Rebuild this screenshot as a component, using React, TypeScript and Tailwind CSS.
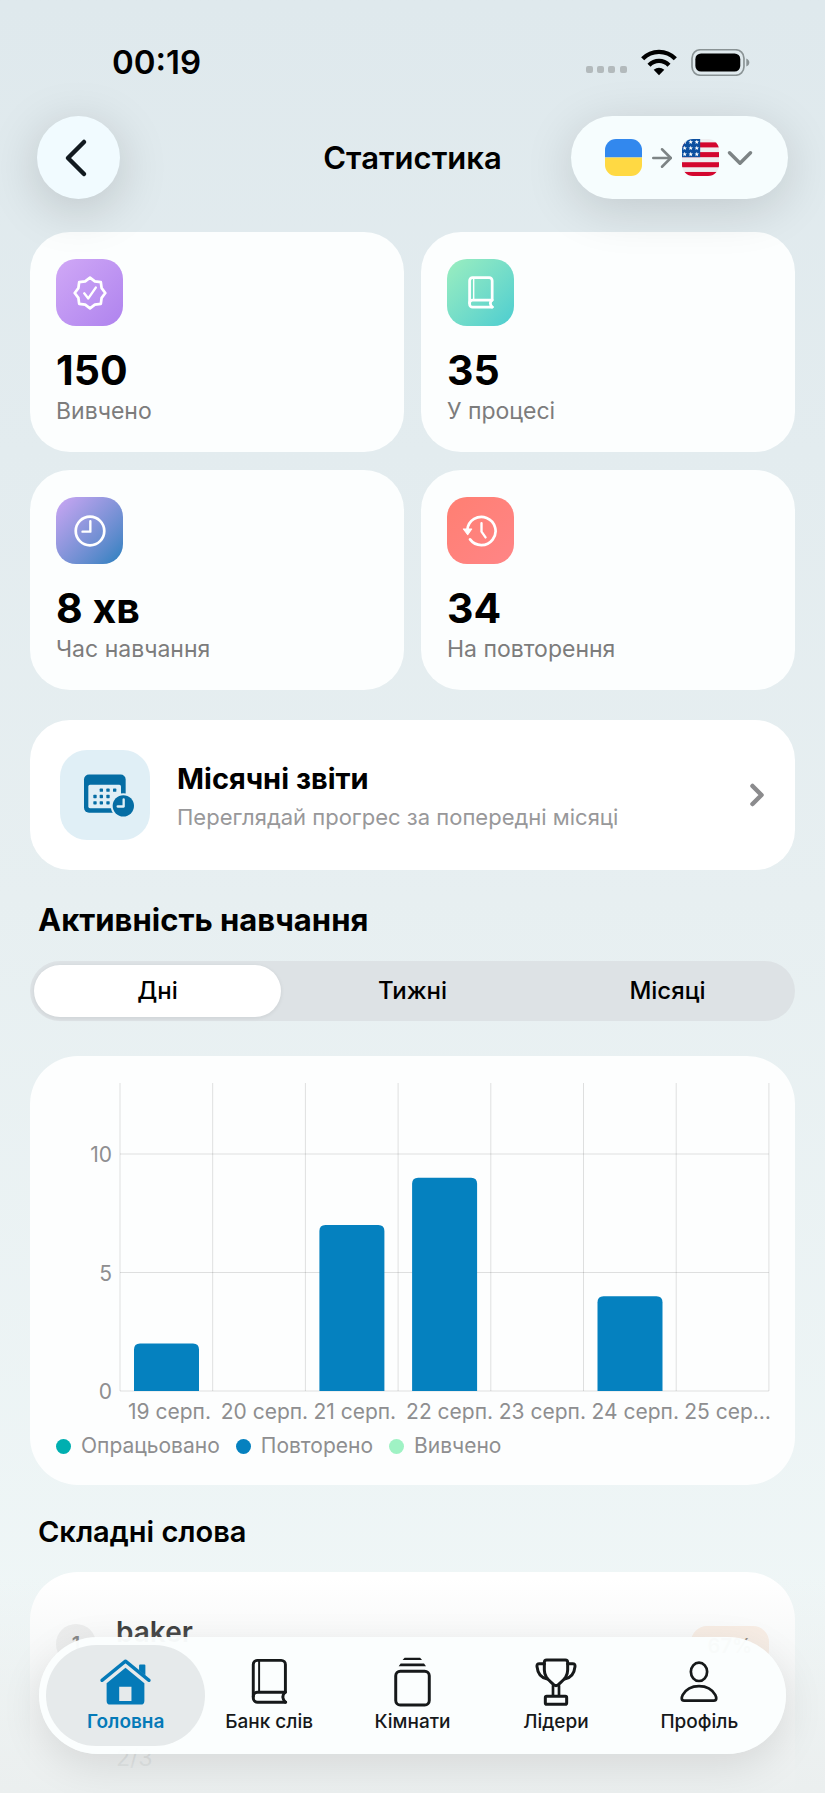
import React, { useState } from 'react';
import { ArrowRight, ChevronDown, ChevronRight } from 'lucide-react';

interface DayActivity {
  label: string;
  value: number;
}

const activity: DayActivity[] = [
  { label: '19 серп.', value: 2 },
  { label: '20 серп.', value: 0 },
  { label: '21 серп.', value: 7 },
  { label: '22 серп.', value: 9 },
  { label: '23 серп.', value: 0 },
  { label: '24 серп.', value: 4 },
  { label: '25 сер…', value: 0 },
];

const legend = [
  { label: 'Опрацьовано', dot: 'bg-[#00afb0]' },
  { label: 'Повторено', dot: 'bg-[#0581bf]' },
  { label: 'Вивчено', dot: 'bg-[#9ff2c4]' },
];

const periods = ['Дні', 'Тижні', 'Місяці'];

// Eight-pointed badge outline, alternating outer and inner radius
const sealPoints = Array.from({ length: 16 }, (_, i) => {
  const r = i % 2 === 0 ? 45 : 37;
  const a = (i * Math.PI) / 8;
  return `${(50 + r * Math.sin(a)).toFixed(1)},${(50 - r * Math.cos(a)).toFixed(1)}`;
}).join(' ');

function BackIcon() {
  return (
    <svg viewBox="0 0 40 40" className="w-10 h-10" fill="none" stroke="currentColor" strokeWidth="4.5" strokeLinecap="round" strokeLinejoin="round">
      <path d="M25 4 L9 20 L25 36" />
    </svg>
  );
}

function SealIcon() {
  return (
    <svg viewBox="0 0 100 100" className="w-[34px] h-[34px]" fill="none" stroke="currentColor" strokeWidth="8" strokeLinecap="round" strokeLinejoin="round">
      <polygon points={sealPoints} />
      <path d="M33 51 L45 66 L67 34" strokeWidth="7" />
    </svg>
  );
}

function BookIcon({ className, stroke }: { className: string; stroke: number }) {
  return (
    <svg viewBox="-2 -2 114 144" className={className} fill="none" stroke="currentColor" strokeWidth={stroke} strokeLinecap="round" strokeLinejoin="round">
      <path d="M104 103 V18 a13 13 0 0 0 -13 -13 H18 A13 13 0 0 0 5 18 V121 a13 13 0 0 0 13 13 H105" />
      <path d="M104 103 H18 a13 13 0 0 0 -13 13" />
      <path d="M102 104 q-13 14 2 30" />
      <path d="M23 5 V102" strokeWidth="6" />
    </svg>
  );
}

function ClockIcon() {
  return (
    <svg viewBox="0 0 100 100" className="w-[34px] h-[34px]" fill="none" stroke="currentColor" strokeWidth="8" strokeLinecap="round" strokeLinejoin="round">
      <circle cx="50" cy="50" r="42" />
      <path d="M51 21 V52 H28" strokeWidth="7" />
    </svg>
  );
}

function HistoryIcon() {
  return (
    <svg viewBox="0 0 110 100" className="w-[37px] h-[34px]" fill="none" stroke="currentColor" strokeWidth="8" strokeLinecap="round" strokeLinejoin="round">
      <path d="M16 46 A42 42 0 1 1 24 75" />
      <path d="M4 44 H29 L17 61 Z" fill="currentColor" strokeWidth="3" />
      <path d="M58 27 V52 L70 69" strokeWidth="7" />
    </svg>
  );
}

function CalendarIcon() {
  return (
    <svg viewBox="-24 0 180 134" className="w-[60px] h-[45px]">
      <rect x="3" y="4" width="125" height="115" rx="15" fill="#056da4" />
      <rect x="16" y="35" width="98" height="70" rx="5" fill="#e0eff6" />
      <g fill="#056da4">
        <rect x="50" y="46" width="10" height="10" rx="2" />
        <rect x="70" y="46" width="10" height="10" rx="2" />
        <rect x="90" y="46" width="10" height="10" rx="2" />
        <rect x="31" y="65" width="10" height="10" rx="2" />
        <rect x="50" y="65" width="10" height="10" rx="2" />
        <rect x="70" y="65" width="10" height="10" rx="2" />
        <rect x="31" y="84" width="10" height="10" rx="2" />
        <rect x="50" y="84" width="10" height="10" rx="2" />
        <rect x="70" y="84" width="10" height="10" rx="2" />
      </g>
      <circle cx="121" cy="98" r="38" fill="#e0eff6" />
      <circle cx="121" cy="98" r="32" fill="#056da4" />
      <path d="M122 79 V100 H104" fill="none" stroke="#e0eff6" strokeWidth="7" strokeLinecap="round" strokeLinejoin="round" />
    </svg>
  );
}

function HomeIcon() {
  return (
    <svg viewBox="0 0 160 144" className="w-[53px] h-[48px]" fill="currentColor">
      <path d="M9 67 L80 9 L151 67" fill="none" stroke="currentColor" strokeWidth="10" strokeLinecap="round" strokeLinejoin="round" />
      <path d="M124 19 h13 a3 3 0 0 1 3 3 V52 L121 37 V22 a3 3 0 0 1 3 -3 Z" />
      <path fillRule="evenodd" d="M80 29 L137 76 V129 a11 11 0 0 1 -11 11 H34 a11 11 0 0 1 -11 -11 V76 Z M61 86 V129 H98 V86 Z" />
    </svg>
  );
}

function CardsIcon() {
  return (
    <svg viewBox="0 0 112 152" className="w-[37px] h-[50px]" fill="none" stroke="currentColor" strokeWidth="9" strokeLinejoin="round">
      <rect x="5" y="43" width="102" height="103" rx="14" />
      <path d="M32 2 H79 L85 9 H26 Z M20 20 H91 L97 28 H14 Z" fill="currentColor" stroke="none" />
    </svg>
  );
}

function TrophyIcon() {
  return (
    <svg viewBox="0 0 124 144" className="w-[42px] h-[48px]" fill="none" stroke="currentColor" strokeWidth="9" strokeLinecap="round" strokeLinejoin="round">
      <path d="M34 6 H90 a7 7 0 0 1 7 7 V36 C97 60 80 68 69 80 Q62 86 55 80 C44 68 27 60 27 36 V13 a7 7 0 0 1 7 -7 Z" />
      <path d="M27 17 H12 Q4 17 5 26 C7 45 16 60 36 63" />
      <path d="M97 17 H112 Q120 17 119 26 C117 45 108 60 88 63" />
      <path d="M53 83 V113 M71 83 V113" strokeWidth="8" />
      <rect x="30" y="115" width="64" height="24" rx="4" />
    </svg>
  );
}

function PersonIcon() {
  return (
    <svg viewBox="0 0 112 124" className="w-[38px] h-[42px]" fill="none" stroke="currentColor" strokeWidth="8" strokeLinejoin="round">
      <ellipse cx="56" cy="32" rx="24" ry="27" />
      <path d="M12 117 C3 117 4 108 8 100 C18 82 36 74 56 74 S94 82 104 100 C108 108 109 117 100 117 Z" />
    </svg>
  );
}

function StatusIcons() {
  return (
    <div className="flex items-center text-black">
      <svg viewBox="0 0 42 8" className="w-[42px] h-2 mt-4" fill="#b3babc">
        <rect x="0" y="0" width="7" height="7" rx="2" />
        <rect x="11" y="0" width="7" height="7" rx="2" />
        <rect x="22" y="0" width="7" height="7" rx="2" />
        <rect x="34" y="0" width="7" height="7" rx="2" />
      </svg>
      <svg viewBox="0 0 108 80" className="w-9 h-[27px] ml-[13px]" fill="none" stroke="currentColor" strokeWidth="13">
        <path d="M5 29 C32 1 76 1 103 29" />
        <path d="M24 48 C41 31 67 31 84 48" />
        <path d="M38 62 Q54 50 70 62 L54 78 Z" fill="currentColor" stroke="none" />
      </svg>
      <svg viewBox="0 0 176 80" className="w-[59px] h-[27px] ml-[14px]">
        <rect x="3" y="2" width="155" height="76" rx="25" fill="none" stroke="#8a9395" strokeWidth="5" />
        <rect x="13" y="13" width="134" height="54" rx="17" fill="#000" />
        <path d="M165 28 C177 32 177 48 165 52 Z" fill="#8a9395" />
      </svg>
    </div>
  );
}

function UkraineFlag() {
  return (
    <svg viewBox="0 0 110 110" className="w-[37px] h-[37px] shrink-0 rounded-[11px]">
      <rect width="110" height="55" fill="#3288ee" />
      <rect y="55" width="110" height="55" fill="#ffd943" />
    </svg>
  );
}

function UsaFlag() {
  return (
    <svg viewBox="0 0 110 110" className="w-[37px] h-[37px] shrink-0 rounded-[11px]">
      <rect width="110" height="110" fill="#eeeef0" />
      {[10, 39, 69, 98].map((y) => (
        <rect key={y} y={y} width="110" height="15" fill="#d3062e" />
      ))}
      <rect width="54" height="54" fill="#0c4fa0" />
      {[9, 27, 45].map((y) =>
        [8, 26, 44].map((x) => (
          <path
            key={`${x}-${y}`}
            transform={`translate(${x} ${y})`}
            d="M0 -7 L2 -2 L7 -2 L3 1 L4 6 L0 3 L-4 6 L-3 1 L-7 -2 L-2 -2 Z"
            fill="#fff"
          />
        ))
      )}
    </svg>
  );
}

interface StatCardProps {
  icon: React.ReactNode;
  tile: string;
  value: string;
  label: string;
}

function StatCard({ icon, tile, value, label }: StatCardProps) {
  return (
    <div className="bg-[#fcfefe] rounded-[40px] px-[26px] py-[27px]">
      <div className={`w-[67px] h-[67px] rounded-[20px] flex items-center justify-center text-white ${tile}`}>
        {icon}
      </div>
      <div className="mt-5 text-[41px] leading-[48px] font-bold">{value}</div>
      <div className="mt-[3px] text-[23px] leading-7 text-[#7c7c7c]">{label}</div>
    </div>
  );
}

function ActivityChart() {
  const left = 64;
  const base = 308;
  const cell = 92.7;
  const unit = 23.7;

  return (
    <svg viewBox="0 0 716 345" className="w-full block" fontSize="21" fill="#8e8e90">
      <g stroke="#000" strokeOpacity="0.12" strokeWidth="1">
        {[0, 5, 10].map((v) => (
          <line key={v} x1={left} x2={left + cell * 7} y1={base - v * unit} y2={base - v * unit} />
        ))}
        {Array.from({ length: 8 }, (_, i) => (
          <line key={i} x1={left + i * cell} x2={left + i * cell} y1={0} y2={base} />
        ))}
      </g>
      {[0, 5, 10].map((v) => (
        <text key={v} x={left - 8} y={base - v * unit + 8} textAnchor="end">
          {v}
        </text>
      ))}
      {activity.map((day, i) => {
        const x = left + i * cell + 14;
        const h = day.value * unit;
        return (
          <g key={day.label}>
            {h > 0 && (
              <path
                d={`M${x} ${base} V${base - h + 6} q0 -6 6 -6 H${x + 59} q6 0 6 6 V${base} Z`}
                fill="#0581bf"
              />
            )}
            <text x={left + i * cell + 8} y="336">
              {day.label}
            </text>
          </g>
        );
      })}
    </svg>
  );
}

const tabs = [
  { label: 'Головна', icon: <HomeIcon /> },
  { label: 'Банк слів', icon: <BookIcon className="w-[37px] h-[47px]" stroke={9} /> },
  { label: 'Кімнати', icon: <CardsIcon /> },
  { label: 'Лідери', icon: <TrophyIcon /> },
  { label: 'Профіль', icon: <PersonIcon /> },
];

function TabBar() {
  return (
    <nav className="absolute z-20 bottom-[39px] inset-x-[39px] flex bg-[#fbfefe]/97 rounded-full px-[15px] py-2 shadow-[0_12px_40px_rgba(0,0,0,0.1)]">
      {tabs.map((tab, i) => (
        <button key={tab.label} type="button" className="flex-1 min-w-0">
          <span
            className={
              i === 0
                ? '-mx-2 flex flex-col items-center rounded-full bg-[#e6eaeb] pb-3 text-[#057ab8]'
                : '-mx-2 flex flex-col items-center rounded-full pb-3 text-[#16191a]'
            }
          >
            <span className="h-[65px] pt-2 flex items-center justify-center">{tab.icon}</span>
            <span className={i === 0 ? 'text-[19px] leading-6 font-semibold' : 'text-[19px] leading-6 font-medium'}>
              {tab.label}
            </span>
          </span>
        </button>
      ))}
    </nav>
  );
}

export default function App() {
  const [period, setPeriod] = useState('Дні');

  return (
    <div className="relative h-screen overflow-hidden bg-linear-to-b from-[#dfe9ed] via-[#e7eff1] to-[#f1f8f8] font-['Inter','Liberation_Sans',sans-serif] text-black">
      {/* Status bar */}
      <div className="flex items-start justify-between pt-[41px] pb-[33px] pl-28 pr-[75px]">
        <span className="text-[33px] leading-[42px] font-semibold">00:19</span>
        <div className="h-[42px] flex items-center">
          <StatusIcons />
        </div>
      </div>

      {/* Header */}
      <header className="relative z-10 grid grid-cols-[1fr_auto_1fr] items-center px-[37px]">
        <button
          type="button"
          aria-label="Назад"
          className="w-[83px] h-[83px] rounded-full bg-[#f1fbff] flex items-center justify-center text-[#121a20] shadow-[0_10px_50px_rgba(0,0,0,0.17)]"
        >
          <BackIcon />
        </button>
        <h1 className="text-[31px] leading-9 font-semibold">Статистика</h1>
        <button
          type="button"
          aria-label="Мови"
          className="justify-self-end h-[83px] pl-[34px] pr-[27px] rounded-full bg-[#f6fdfe] flex items-center text-[#7d8485] shadow-[0_10px_50px_rgba(0,0,0,0.14)]"
        >
          <UkraineFlag />
          <ArrowRight className="w-[30px] h-[30px] mx-[5px]" strokeWidth={2} />
          <UsaFlag />
          <ChevronDown className="w-[42px] h-[42px]" strokeWidth={2} />
        </button>
      </header>

      <main className="px-[30px] pt-[33px]">
        {/* Stats */}
        <div className="grid grid-cols-2 gap-x-[17px] gap-y-[18px]">
          <StatCard icon={<SealIcon />} tile="bg-linear-to-br from-[#d0a8f6] to-[#af83ee]" value="150" label="Вивчено" />
          <StatCard icon={<BookIcon className="w-[26px] h-[33px]" stroke={12} />} tile="bg-linear-to-br from-[#9aeebf] to-[#4bcdd0]" value="35" label="У процесі" />
          <StatCard icon={<ClockIcon />} tile="bg-linear-to-br from-[#cba6f4] to-[#2380bf]" value="8 хв" label="Час навчання" />
          <StatCard icon={<HistoryIcon />} tile="bg-linear-to-br from-[#ff7f72] to-[#ff8586]" value="34" label="На повторення" />
        </div>

        {/* Monthly reports */}
        <a href="#reports" className="mt-[30px] flex items-center bg-white rounded-[40px] p-[30px]">
          <span className="w-[90px] h-[90px] shrink-0 rounded-[27px] bg-[#e0eff6] flex items-center justify-center">
            <CalendarIcon />
          </span>
          <span className="ml-[27px] flex-1 min-w-0 flex flex-col gap-1 pt-1">
            <span className="text-[29px] leading-9 font-bold">Місячні звіти</span>
            <span className="text-[22px] leading-8 text-[#98989a]">Переглядай прогрес за попередні місяці</span>
          </span>
          <ChevronRight className="w-9 h-9 -mr-[10px] text-[#8b8b8d]" strokeWidth={3} />
        </a>

        {/* Activity */}
        <h2 className="mt-8 px-2 text-[31px] leading-9 font-bold">Активність навчання</h2>
        <div className="mt-[23px] h-[60px] flex rounded-full bg-[#dde2e5]">
          {periods.map((p) => (
            <button key={p} type="button" onClick={() => setPeriod(p)} className="flex-1 p-1">
              <span
                className={
                  p === period
                    ? 'h-full flex items-center justify-center rounded-full bg-white text-[24px] font-medium shadow-[0_1px_4px_rgba(0,0,0,0.08)]'
                    : 'h-full flex items-center justify-center rounded-full text-[24px] font-medium'
                }
              >
                {p}
              </span>
            </button>
          ))}
        </div>

        <section className="mt-[35px] bg-[#fdfefe] rounded-[48px] pl-[26px] pr-[23px] pt-[27px] pb-[25px]">
          <ActivityChart />
          <ul className="mt-1 flex gap-4 text-[21px] leading-7 text-[#8e8e90]">
            {legend.map((item) => (
              <li key={item.label} className="flex items-center gap-[10px]">
                <span className={`w-[15px] h-[15px] rounded-full ${item.dot}`} />
                {item.label}
              </li>
            ))}
          </ul>
        </section>

        {/* Difficult words */}
        <h2 className="mt-[29px] px-2 text-[29px] leading-9 font-semibold">Складні слова</h2>
        <div className="mt-[22px] flex items-start bg-white rounded-t-[48px] px-[26px] pt-[42px] pb-10">
          <span className="mt-[10px] w-10 h-10 rounded-full bg-[#ececec] flex items-center justify-center text-[20px] font-semibold text-[#555]">
            1
          </span>
          <div className="ml-5 flex-1 flex flex-col gap-[92px]">
            <span className="text-[28px] leading-9 font-semibold">baker</span>
            <span className="text-[23px] leading-8 text-[#8d8f8f]">2/3</span>
          </div>
          <span className="mt-3 h-10 px-[17px] rounded-2xl bg-[#fcece0] flex items-center text-[20px] font-semibold text-[#6b5a48]">
            67%
          </span>
        </div>
      </main>

      {/* Fade behind the tab bar */}
      <div className="absolute z-10 inset-x-0 bottom-0 h-[215px] bg-linear-to-b from-[#ebeeee]/0 via-[#ebeeee]/60 to-[#ebefef]" />
      <TabBar />
    </div>
  );
}
